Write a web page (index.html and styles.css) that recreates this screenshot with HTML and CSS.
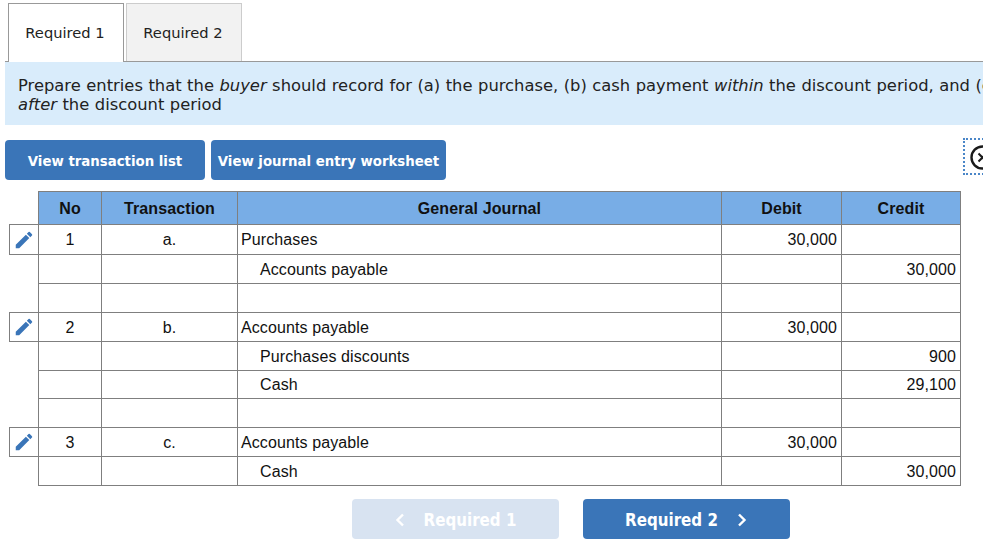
FILE: index.html
```html
<!doctype html>
<html lang="en">
<head>
    <meta charset="UTF-8">
    <title>Journal entries</title>
    <link rel="stylesheet" href="styles.css">
</head>
<body>
<div class="tabs">
    <div class="tab tab-active">Required 1</div>
    <div class="tab">Required 2</div>
</div>

<div class="prompt">
    Prepare entries that the <em>buyer</em> should record for (a) the purchase, (b) cash payment <em>within</em> the discount period, and (c)<br>
    <em>after</em> the discount period
</div>

<div class="toolbar">
    <button class="btn btn-list">View transaction list</button>
    <button class="btn btn-sheet">View journal entry worksheet</button>
    <div class="close-box">
        <svg class="close-icon" width="25" height="25" viewBox="0 0 25 25">
            <circle cx="12.5" cy="12.5" r="11" fill="none" stroke="#1a1a1a" stroke-width="2.4"/>
            <path d="M8.5 8.5l8 8M16.5 8.5l-8 8" fill="none" stroke="#1a1a1a" stroke-width="2"/>
        </svg>
    </div>
</div>

<table class="journal">
    <colgroup>
        <col class="c-edit"><col class="c-no"><col class="c-trans"><col class="c-gj"><col class="c-debit"><col class="c-credit">
    </colgroup>
    <thead>
        <tr>
            <th class="edit"></th><th>No</th><th>Transaction</th><th>General Journal</th><th>Debit</th><th>Credit</th>
        </tr>
    </thead>
    <tbody>
        <tr class="h30">
            <td class="edit has-btn"><svg width="22" height="22" viewBox="0 0 24 24"><path fill="#3a75b8" d="M3 17.25V21h3.75L17.8 9.94l-3.75-3.75L3 17.25zM20.7 7.04a1 1 0 0 0 0-1.41l-2.34-2.34a1 1 0 0 0-1.41 0l-1.83 1.83 3.75 3.75 1.83-1.83z"/></svg></td>
            <td class="mid">1</td><td class="mid">a.</td><td>Purchases</td><td class="num">30,000</td><td class="num"></td>
        </tr>
        <tr>
            <td class="edit"></td><td></td><td></td><td class="sub">Accounts payable</td><td></td><td class="num">30,000</td>
        </tr>
        <tr>
            <td class="edit"></td><td></td><td></td><td></td><td></td><td></td>
        </tr>
        <tr>
            <td class="edit has-btn"><svg width="22" height="22" viewBox="0 0 24 24"><path fill="#3a75b8" d="M3 17.25V21h3.75L17.8 9.94l-3.75-3.75L3 17.25zM20.7 7.04a1 1 0 0 0 0-1.41l-2.34-2.34a1 1 0 0 0-1.41 0l-1.83 1.83 3.75 3.75 1.83-1.83z"/></svg></td>
            <td class="mid">2</td><td class="mid">b.</td><td>Accounts payable</td><td class="num">30,000</td><td></td>
        </tr>
        <tr>
            <td class="edit"></td><td></td><td></td><td class="sub">Purchases discounts</td><td></td><td class="num">900</td>
        </tr>
        <tr class="h28">
            <td class="edit"></td><td></td><td></td><td class="sub">Cash</td><td></td><td class="num">29,100</td>
        </tr>
        <tr>
            <td class="edit"></td><td></td><td></td><td></td><td></td><td></td>
        </tr>
        <tr>
            <td class="edit has-btn"><svg width="22" height="22" viewBox="0 0 24 24"><path fill="#3a75b8" d="M3 17.25V21h3.75L17.8 9.94l-3.75-3.75L3 17.25zM20.7 7.04a1 1 0 0 0 0-1.41l-2.34-2.34a1 1 0 0 0-1.41 0l-1.83 1.83 3.75 3.75 1.83-1.83z"/></svg></td>
            <td class="mid">3</td><td class="mid">c.</td><td>Accounts payable</td><td class="num">30,000</td><td></td>
        </tr>
        <tr>
            <td class="edit"></td><td></td><td></td><td class="sub">Cash</td><td></td><td class="num">30,000</td>
        </tr>
    </tbody>
</table>

<div class="pager">
    <button class="btn btn-nav btn-disabled">
        <svg class="chev" width="10" height="14" viewBox="0 0 10 14"><path d="M8 1.5L2.5 7 8 12.5" fill="none" stroke="#fff" stroke-width="2.4"/></svg>
        Required 1
    </button>
    <button class="btn btn-nav btn-next">
        Required 2
        <svg class="chev" width="10" height="14" viewBox="0 0 10 14"><path d="M2 1.5L7.5 7 2 12.5" fill="none" stroke="#fff" stroke-width="2.4"/></svg>
    </button>
</div>
</body>
</html>
```

FILE: styles.css
```css
* {
    margin: 0;
    padding: 0;
    box-sizing: border-box;
}

html, body {
    overflow: hidden;
}

body {
    width: 983px;
    height: 542px;
    background-color: #fff;
    font-family: "DejaVu Sans", Verdana, sans-serif;
    color: #222;
}

.tabs {
    display: flex;
    gap: 2px;
    height: 62px;
    margin-left: 5px;
    padding: 3px 0 0 3px;
    border-bottom: 1px solid #999;
}

.tab {
    width: 116px;
    height: 58px;
    padding: 20px 2px 0 0;
    text-align: center;
    font-size: 14.7px;
    background-color: #f2f2f2;
    border: 1px solid #ccc;
    border-bottom: 0;
}

.tab-active {
    height: 59px;
    background-color: #fff;
    border-color: #999;
}

.prompt {
    margin-left: 5px;
    height: 63px;
    padding: 14px 0 0 13px;
    background-color: #d9ecfb;
    font-size: 16.35px;
    line-height: 19px;
    word-spacing: .3px;
    white-space: nowrap;
    overflow: hidden;
}

.toolbar {
    display: flex;
    align-items: flex-start;
    gap: 6px;
    height: 40px;
    margin: 15px 0 0 5px;
}

.btn {
    height: 40px;
    border: 0;
    border-radius: 4px;
    background-color: #3a75b8;
    color: #fff;
    font-family: "DejaVu Sans", Verdana, sans-serif;
    font-stretch: condensed;
    font-size: 14.8px;
    font-weight: 700;
    white-space: nowrap;
}

.btn-list {
    width: 200px;
}

.btn-sheet {
    width: 235px;
}

.close-box {
    flex: none;
    width: 41px;
    height: 37px;
    margin: -2px -21px 0 auto;
    padding: 5px 0 0 5px;
    border: 2px dotted #4a86c8;
}

.close-icon {
    display: block;
}

.journal {
    width: 952px;
    margin: 11px 0 0 9px;
    border-collapse: collapse;
    table-layout: fixed;
    font-family: "Liberation Sans", Arial, sans-serif;
    font-size: 16px;
    color: #111;
}

.c-edit { width: 29px; }
.c-no { width: 63px; }
.c-trans { width: 136px; }
.c-gj { width: 484px; }
.c-debit { width: 120px; }
.c-credit { width: 119px; }

.journal th,
.journal td {
    border: 1px solid #7f7f7f;
}

.journal th {
    height: 33px;
    padding-top: 2px;
    background-color: #78ade6;
    font-weight: 700;
    letter-spacing: .1px;
}

.journal td {
    height: 29px;
    padding: 2px 3px 0;
    letter-spacing: .1px;
}

.journal tbody tr:first-child td {
    height: 30px;
    padding-top: 0;
}

.journal td.mid {
    text-align: center;
}

.journal td.num {
    text-align: right;
    padding-right: 4px;
}

.journal td.sub {
    padding-left: 22px;
}

.journal .edit {
    border-width: 0 1px 0 0;
    background-color: #fff;
    padding: 0;
}

.journal td.has-btn {
    border-width: 1px;
    text-align: center;
    line-height: 0;
}

.journal .h28 td {
    height: 28px;
    padding-top: 0;
}

.pager {
    display: flex;
    gap: 24px;
    margin-top: 13px;
    padding-left: 352px;
}

.btn-nav {
    display: flex;
    align-items: center;
    justify-content: center;
    gap: 19px;
    width: 207px;
    padding-top: 1px;
    font-size: 16.8px;
}

.btn-next {
    padding-right: 1px;
}

.btn-disabled {
    background-color: #d8e3f1;
}

.chev {
    display: block;
}
```
